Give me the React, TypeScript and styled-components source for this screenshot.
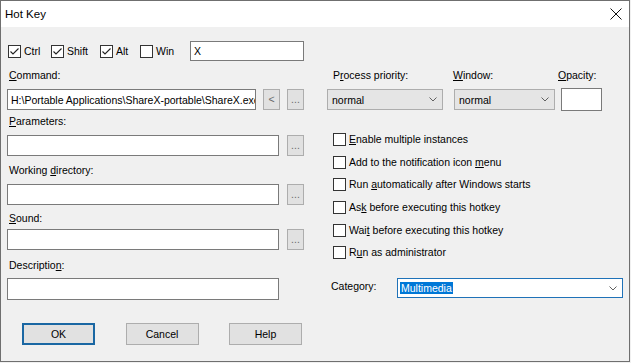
import React from "react";
import styled, { createGlobalStyle } from "styled-components";

const Global = createGlobalStyle`
  html, body { margin: 0; padding: 0; background: #f0f0f0; }
  body {
    font-family: "Liberation Sans", Arial, sans-serif;
    font-size: 10.5px;
    color: #000;
  }
  * { box-sizing: border-box; }
`;

const Window = styled.div`
  width: 630px;
  height: 362px;
  border: 1px solid #6f6f6f;
  background: #f0f0f0;
  display: flex;
  flex-direction: column;
`;

const TitleBar = styled.div`
  height: 26px;
  flex: none;
  background: #fff;
  display: flex;
  align-items: center;
  justify-content: space-between;
  padding: 0 7px 0 4px;
`;

const Title = styled.span`
  font-size: 11.5px;
`;

const Body = styled.div`
  flex: 1;
  display: flex;
  align-items: flex-start;
  padding-left: 6px;
  gap: 23px;
`;

const LeftColumn = styled.div`
  width: 297px;
  flex: none;
  display: flex;
  flex-direction: column;
`;

const RightColumn = styled.div`
  width: 296px;
  flex: none;
  display: flex;
  flex-direction: column;
`;

const Key = styled.span`
  text-decoration: underline;
  text-underline-offset: 1px;
`;

const HotkeyRow = styled.div`
  margin-top: 14px;
  height: 20px;
  display: flex;
  align-items: center;
  padding-left: 1px;
`;

const CheckOption = styled.div<{ $w?: number }>`
  display: flex;
  align-items: center;
  gap: 3px;
  line-height: 13px;
  white-space: nowrap;
  flex: none;
  ${(p) => (p.$w ? `width: ${p.$w}px;` : "")}
`;

const Box = styled.span`
  width: 13px;
  height: 13px;
  flex: none;
  border: 1px solid #333;
  background: #fff;
  display: flex;
  align-items: center;
  justify-content: center;
`;

const TextBox = styled.div<{ $w: number; $h?: number }>`
  width: ${(p) => p.$w}px;
  height: ${(p) => p.$h ?? 21}px;
  flex: none;
  border: 1px solid #7a7a7a;
  background: #fff;
  padding-left: 3px;
  display: flex;
  align-items: center;
  overflow: hidden;
  white-space: nowrap;
`;

const FieldLabel = styled.div<{ $mt: number; $mb: number }>`
  margin-top: ${(p) => p.$mt}px;
  margin-bottom: ${(p) => p.$mb}px;
  padding-left: 2px;
  line-height: 13px;
  white-space: nowrap;
`;

const FieldRow = styled.div<{ $gap: number }>`
  display: flex;
  align-items: flex-start;
  gap: ${(p) => p.$gap}px;
`;

const SmallButton = styled.div`
  width: 17px;
  height: 21px;
  flex: none;
  border: 1px solid #adadad;
  background: #e1e1e1;
  color: #6a6a6a;
  display: flex;
  align-items: center;
  justify-content: center;
  line-height: 13px;
`;

const ButtonRow = styled.div`
  margin-top: 23px;
  display: flex;
  gap: 30.5px;
  padding-left: 15px;
`;

const Button = styled.div<{ $default?: boolean }>`
  width: 73px;
  height: 22px;
  border: ${(p) => (p.$default ? "2px solid #1a67a3" : "1px solid #adadad")};
  background: #e1e1e1;
  display: flex;
  align-items: center;
  justify-content: center;
`;

const TopRow = styled.div`
  margin-top: 42px;
  display: flex;
  align-items: flex-start;
`;

const TopField = styled.div<{ $ml: number }>`
  margin-left: ${(p) => p.$ml}px;
  display: flex;
  flex-direction: column;
  flex: none;
`;

const TopLabel = styled.span<{ $pl: number }>`
  padding-left: ${(p) => p.$pl}px;
  line-height: 13px;
  white-space: nowrap;
`;

const Slot = styled.div<{ $mt: number; $ml?: number }>`
  margin-top: ${(p) => p.$mt}px;
  margin-left: ${(p) => p.$ml ?? 0}px;
`;

const Combo = styled.div<{ $w: number; $h?: number }>`
  width: ${(p) => p.$w}px;
  height: ${(p) => p.$h ?? 21}px;
  border: 1px solid #adadad;
  background: #e5e5e5;
  display: flex;
  align-items: center;
  justify-content: space-between;
  padding: 0 5px 0 4px;
  white-space: nowrap;
`;

const EditCombo = styled(Combo)`
  border-color: #1f72b8;
  background: #fff;
  padding-left: 2px;
  padding-right: 5px;
`;

const Selected = styled.span`
  background: #0078d7;
  color: #fff;
  line-height: 12px;
  padding: 0 1px;
`;

const CheckList = styled.div`
  margin-top: 17.5px;
  display: flex;
  flex-direction: column;
  padding-left: 6px;
`;

const CheckRow = styled(CheckOption)`
  height: 22.6px;
`;

const CategoryRow = styled.div`
  margin-top: 14px;
  display: flex;
  align-items: flex-start;
`;

const CategoryLabel = styled.span`
  width: 70px;
  flex: none;
  padding: 1.5px 0 0 4px;
  line-height: 13px;
`;

const Chevron = () => (
  <svg width="8" height="5" viewBox="0 0 8 5">
    <polyline points="0.5,0.5 4,4 7.5,0.5" fill="none" stroke="#606060" strokeWidth="1" />
  </svg>
);

const CloseIcon = () => (
  <svg width="12" height="12" viewBox="0 0 12 12">
    <line x1="0.5" y1="0.5" x2="11.5" y2="11.5" stroke="#111" strokeWidth="1" />
    <line x1="11.5" y1="0.5" x2="0.5" y2="11.5" stroke="#111" strokeWidth="1" />
  </svg>
);

const Check = ({ on }: { on?: boolean }) => (
  <Box>
    {on && (
      <svg width="11" height="11" viewBox="0 0 11 11">
        <polyline points="1.5,5.5 4,8 9.5,2.5" fill="none" stroke="#222" strokeWidth="1.1" />
      </svg>
    )}
  </Box>
);

const options: React.ReactNode[] = [
  <><Key>E</Key>nable multiple instances</>,
  <>Add to the notification icon <Key>m</Key>enu</>,
  <>Run <Key>a</Key>utomatically after Windows starts</>,
  <>As<Key>k</Key> before executing this hotkey</>,
  <>Wai<Key>t</Key> before executing this hotkey</>,
  <>R<Key>u</Key>n as administrator</>,
];

export default function App() {
  return (
    <>
      <Global />
      <Window>
        <TitleBar>
          <Title>Hot Key</Title>
          <CloseIcon />
        </TitleBar>
        <Body>
          <LeftColumn>
            <HotkeyRow>
              <CheckOption $w={43}><Check on />Ctrl</CheckOption>
              <CheckOption $w={49}><Check on />Shift</CheckOption>
              <CheckOption $w={40}><Check on />Alt</CheckOption>
              <CheckOption $w={50}><Check />Win</CheckOption>
              <TextBox $w={114} $h={20}>X</TextBox>
            </HotkeyRow>

            <FieldLabel $mt={8} $mb={7}><Key>C</Key>ommand:</FieldLabel>
            <FieldRow $gap={7}>
              <TextBox $w={249}>H:\Portable Applications\ShareX-portable\ShareX.exe</TextBox>
              <SmallButton>&lt;</SmallButton>
              <SmallButton>...</SmallButton>
            </FieldRow>

            <FieldLabel $mt={5} $mb={7}><Key>P</Key>arameters:</FieldLabel>
            <FieldRow $gap={8}>
              <TextBox $w={272} />
              <SmallButton>...</SmallButton>
            </FieldRow>

            <FieldLabel $mt={8} $mb={7}>Working <Key>d</Key>irectory:</FieldLabel>
            <FieldRow $gap={8}>
              <TextBox $w={272} />
              <SmallButton>...</SmallButton>
            </FieldRow>

            <FieldLabel $mt={7} $mb={4}><Key>S</Key>ound:</FieldLabel>
            <FieldRow $gap={8}>
              <TextBox $w={272} />
              <SmallButton>...</SmallButton>
            </FieldRow>

            <FieldLabel $mt={9} $mb={6}>Descriptio<Key>n</Key>:</FieldLabel>
            <TextBox $w={272} $h={22} />

            <ButtonRow>
              <Button $default>OK</Button>
              <Button>Cancel</Button>
              <Button>Help</Button>
            </ButtonRow>
          </LeftColumn>

          <RightColumn>
            <TopRow>
              <TopField $ml={0}>
                <TopLabel $pl={6}>P<Key>r</Key>ocess priority:</TopLabel>
                <Slot $mt={7}>
                  <Combo $w={116}>normal<Chevron /></Combo>
                </Slot>
              </TopField>
              <TopField $ml={10}>
                <TopLabel $pl={0}><Key>W</Key>indow:</TopLabel>
                <Slot $mt={7} $ml={1}>
                  <Combo $w={101}>normal<Chevron /></Combo>
                </Slot>
              </TopField>
              <TopField $ml={3}>
                <TopLabel $pl={0}><Key>O</Key>pacity:</TopLabel>
                <Slot $mt={6} $ml={3}>
                  <TextBox $w={41} $h={23} />
                </Slot>
              </TopField>
            </TopRow>

            <CheckList>
              {options.map((o, i) => (
                <CheckRow key={i}>
                  <Check />
                  <span>{o}</span>
                </CheckRow>
              ))}
            </CheckList>

            <CategoryRow>
              <CategoryLabel>Cate<Key>g</Key>ory:</CategoryLabel>
              <EditCombo $w={226} $h={20}>
                <Selected>Multimedia</Selected>
                <Chevron />
              </EditCombo>
            </CategoryRow>
          </RightColumn>
        </Body>
      </Window>
    </>
  );
}
